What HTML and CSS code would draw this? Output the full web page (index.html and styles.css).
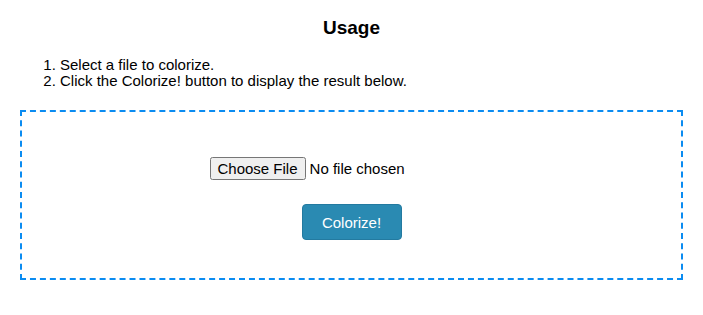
FILE: index.html
```html
<!DOCTYPE html>
<html lang="en">

<head>
    <meta charset="UTF-8" />
    <meta name="viewport" content="width=device-width, initial-scale=1.0" />
    <title>Colorize</title>
    <link rel="stylesheet" href="styles.css">
</head>

<body>
    <div class="container">
        <!-- Usage notes -->
        <h2>Usage</h2>
        <ol class="steps">
            <li>Select a file to colorize.</li>
            <li>Click the Colorize! button to display the result below.</li>
        </ol>

        <!-- Upload form -->
        <form class="upload-box" method="post" enctype="multipart/form-data">
            <div class="file-row">
                <input type="file" name="image" id="image" class="file-input" />
            </div>
            <button type="submit" class="colorize-button">Colorize!</button>
        </form>
    </div>
</body>

</html>
```

FILE: styles.css
```css
body {
    font-family: "Liberation Sans", Arial, sans-serif;
    font-size: 15px;
    margin: 0;
    color: #000;
    background: #fff;
}

.container {
    padding: 0 20px;
}

h2 {
    margin: 0;
    padding-top: 17px;
    font-size: 19px;
    line-height: 22px;
    text-align: center;
}

.steps {
    margin: 18px 0 0;
    padding-left: 40px;
    line-height: 16px;
}

.upload-box {
    margin-top: 21px;
    height: 166px;
    border: 2px dashed #0b8cf1;
    text-align: center;
}

.file-row {
    padding-top: 45px;
}

.file-input {
    width: 284px;
    font-family: "Liberation Sans", Arial, sans-serif;
    font-size: 15px;
}

.colorize-button {
    display: block;
    margin: 24px auto 0;
    width: 100px;
    height: 36px;
    background: #2a8ab2;
    color: #fff;
    font-family: "Liberation Sans", Arial, sans-serif;
    font-size: 15px;
    border: 1px solid #237aa0;
    border-radius: 4px;
    cursor: pointer;
}
```
